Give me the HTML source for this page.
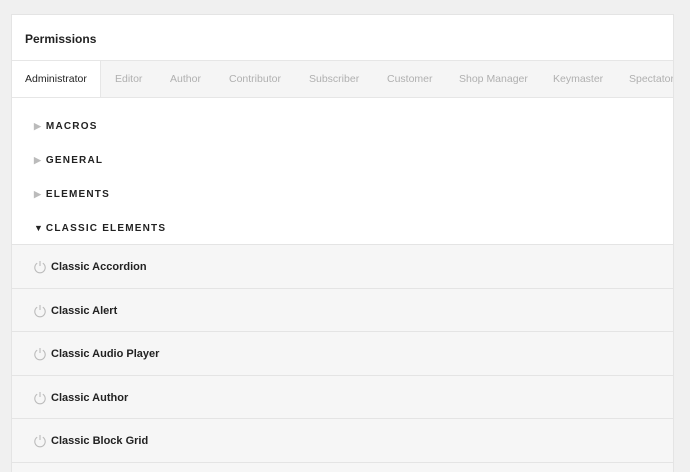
<!DOCTYPE html>
<html><head><style>
*{box-sizing:border-box;margin:0;padding:0}
html,body{width:690px;height:472px;overflow:hidden}
body{background:#f0f0f0;font-family:"Liberation Sans",sans-serif;position:relative}
.card{position:absolute;left:11px;top:14px;width:663px;height:458px;background:#fff;border:1px solid #e4e4e4;border-bottom:none;overflow:hidden}
.hd{height:46px;border-bottom:1px solid #e6e6e6;padding:17px 0 0 13px;font-size:12px;font-weight:bold;color:#222}
.tabs{height:37px;background:#f5f5f5;border-bottom:1px solid #e6e6e6;position:relative;white-space:nowrap;overflow:hidden}
.tab{position:absolute;top:12px;font-size:10.5px;color:#b0b0b0}
.tab.a{left:0;top:0;width:89px;height:37px;background:#fff;border-right:1px solid #e6e6e6;color:#222;padding:12px 0 0 13px}
.sec{position:absolute;left:22px;font-size:10px;font-weight:bold;letter-spacing:1.2px;color:#222}
.sec i{font-style:normal;color:#bbb;font-size:9px;letter-spacing:0;margin-right:5px}
.sec i.d{color:#222;margin-right:3px}
.row{position:absolute;left:0;width:661px;height:44px;background:#f6f6f6;border-top:1px solid #e4e4e4}
.row svg{position:absolute;left:21px;top:15px}
.row span{position:absolute;left:39px;top:16px;font-size:11px;font-weight:bold;color:#222}
</style></head><body>
<div class="card">
<div class="hd">Permissions</div>
<div class="tabs">
<div class="tab a">Administrator</div>
<div class="tab" style="left:103px">Editor</div>
<div class="tab" style="left:158px">Author</div>
<div class="tab" style="left:217px">Contributor</div>
<div class="tab" style="left:297px">Subscriber</div>
<div class="tab" style="left:375px">Customer</div>
<div class="tab" style="left:447px">Shop Manager</div>
<div class="tab" style="left:541px">Keymaster</div>
<div class="tab" style="left:617px">Spectator</div>
</div>
<div class="sec" style="top:106px"><i>▶</i>MACROS</div>
<div class="sec" style="top:140px"><i>▶</i>GENERAL</div>
<div class="sec" style="top:174px"><i>▶</i>ELEMENTS</div>
<div class="sec" style="top:208px"><i class="d">▼</i>CLASSIC ELEMENTS</div>
<div class="row" style="top:229px"><svg width="14" height="14" viewBox="0 0 14 14" fill="none" stroke="#bbb" stroke-width="1.1"><path d="M4.2 3.2A5.2 5.2 0 1 0 9.8 3.2"/><path d="M7 1v5"/></svg><span>Classic Accordion</span></div>
<div class="row" style="top:273px"><svg width="14" height="14" viewBox="0 0 14 14" fill="none" stroke="#bbb" stroke-width="1.1"><path d="M4.2 3.2A5.2 5.2 0 1 0 9.8 3.2"/><path d="M7 1v5"/></svg><span>Classic Alert</span></div>
<div class="row" style="top:316px"><svg width="14" height="14" viewBox="0 0 14 14" fill="none" stroke="#bbb" stroke-width="1.1"><path d="M4.2 3.2A5.2 5.2 0 1 0 9.8 3.2"/><path d="M7 1v5"/></svg><span>Classic Audio Player</span></div>
<div class="row" style="top:360px"><svg width="14" height="14" viewBox="0 0 14 14" fill="none" stroke="#bbb" stroke-width="1.1"><path d="M4.2 3.2A5.2 5.2 0 1 0 9.8 3.2"/><path d="M7 1v5"/></svg><span>Classic Author</span></div>
<div class="row" style="top:403px"><svg width="14" height="14" viewBox="0 0 14 14" fill="none" stroke="#bbb" stroke-width="1.1"><path d="M4.2 3.2A5.2 5.2 0 1 0 9.8 3.2"/><path d="M7 1v5"/></svg><span>Classic Block Grid</span></div>
<div class="row" style="top:447px;height:11px"></div>
</div>
</body></html>
